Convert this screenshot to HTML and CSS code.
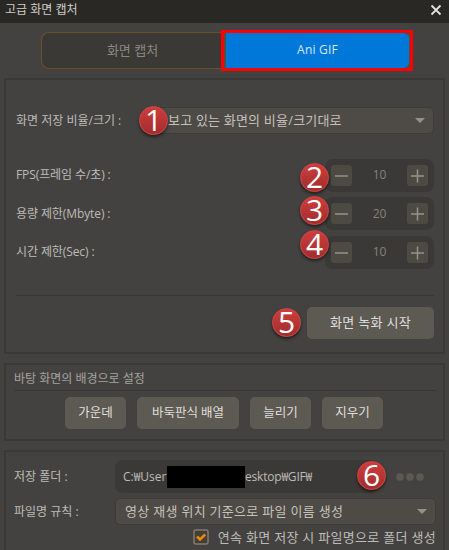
FILE: index.html
```html
<!DOCTYPE html>
<html lang="ko">
<head>
    <meta charset="UTF-8">
    <title>고급 화면 캡처</title>
    <link rel="stylesheet" href="styles.css">
</head>

<body>
    <header class="titlebar">
        <span>고급 화면 캡처</span>
        <svg class="close" width="12" height="12" viewBox="0 0 12 12"><path d="M1.5 1.5l9 9M10.5 1.5l-9 9"/></svg>
    </header>

    <nav class="tabs">
        <div class="tab"><span>화면 캡처</span></div>
        <div class="tab-active"><div class="tab-fill"><span>Ani GIF</span></div></div>
    </nav>

    <section class="panel capture">
        <div class="row row-ratio">
            <span>화면 저장 비율/크기 :</span>
            <div class="select ratio"><span>보고 있는 화면의 비율/크기대로</span><i class="arrow"></i></div>
            <b class="badge b1">1</b>
        </div>
        <div class="row">
            <span class="tight">FPS(프레임 수/초) :</span>
            <div class="stepper">
                <svg width="21" height="21" viewBox="0 0 21 21"><path d="M4 11h13"/></svg>
                <span>10</span>
                <svg width="21" height="21" viewBox="0 0 21 21"><path d="M4 11h13M10.5 4.5v13"/></svg>
            </div>
            <b class="badge b2">2</b>
        </div>
        <div class="row">
            <span class="tight">용량 제한(Mbyte) :</span>
            <div class="stepper">
                <svg width="21" height="21" viewBox="0 0 21 21"><path d="M4 11h13"/></svg>
                <span>20</span>
                <svg width="21" height="21" viewBox="0 0 21 21"><path d="M4 11h13M10.5 4.5v13"/></svg>
            </div>
            <b class="badge b3">3</b>
        </div>
        <div class="row">
            <span class="tight">시간 제한(Sec) :</span>
            <div class="stepper">
                <svg width="21" height="21" viewBox="0 0 21 21"><path d="M4 11h13"/></svg>
                <span>10</span>
                <svg width="21" height="21" viewBox="0 0 21 21"><path d="M4 11h13M10.5 4.5v13"/></svg>
            </div>
            <b class="badge b4">4</b>
        </div>
        <div class="record">
            <div class="btn start"><span>화면 녹화 시작</span></div>
            <b class="badge b5">5</b>
        </div>
    </section>

    <section class="panel wallpaper">
        <div class="heading"><span>바탕 화면의 배경으로 설정</span></div>
        <div class="buttons">
            <div class="btn w62"><span>가운데</span></div>
            <div class="btn w102"><span>바둑판식 배열</span></div>
            <div class="btn w62"><span>늘리기</span></div>
            <div class="btn w62"><span>지우기</span></div>
        </div>
    </section>

    <section class="panel storage">
        <div class="line folder">
            <span>저장 폴더 :</span>
            <div class="path">
                <span class="t-user">C:₩User</span>
                <span class="mask"></span>
                <span class="t-desk">esktop₩GIF₩</span>
            </div>
            <svg class="dots" width="28" height="8" viewBox="0 0 28 8"><circle cx="4" cy="4" r="3.8"/><circle cx="14" cy="4" r="3.8"/><circle cx="24" cy="4" r="3.8"/></svg>
            <b class="badge b6">6</b>
        </div>
        <div class="line rule">
            <span>파일명 규칙 :</span>
            <div class="select name"><span>영상 재생 위치 기준으로 파일 이름 생성</span><i class="arrow"></i></div>
        </div>
        <div class="check">
            <svg width="16" height="16" viewBox="0 0 16 16"><rect x="1" y="1" width="14" height="14" rx="2"/><path d="M4 7.5l3 3 5.200-5"/></svg>
            <span>연속 화면 저장 시 파일명으로 폴더 생성</span>
        </div>
    </section>
</body>
</html>
```
FILE: styles.css
```css
* {
    box-sizing: border-box;
}

body {
    margin: 0;
    width: 449px;
    height: 550px;
    overflow: hidden;
    background: #444240;
    color: #bdbbb7;
    font-family: "Open Sans", "Noto Sans CJK KR", sans-serif;
    font-size: 12px;
    line-height: 16px;
    white-space: nowrap;
}

.titlebar {
    display: flex;
    justify-content: space-between;
    align-items: center;
    height: 23px;
    padding: 0 7px 3px 5px;
    background: #292824;
    color: #d0cec9;
}

.close path {
    stroke: #e4e3e0;
    stroke-width: 1.800;
    fill: none;
}

.tabs {
    display: flex;
    align-items: center;
    height: 41px;
    margin: 7px 36px 0 41px;
}

.tab {
    display: flex;
    align-items: center;
    justify-content: center;
    width: 180px;
    height: 37px;
    padding: 0 0 2px 2px;
    border: 1px solid #6a4f2d;
    border-right: 0;
    border-radius: 8px 0 0 8px;
    background: #3b3936;
    color: #8c887e;
    font-size: 13px;
}

.tab-active {
    width: 192px;
    height: 41px;
    border: 3px solid #ff0000;
    background: #5a4c3c;
    padding: 0 1px 0 2px;
}

.tab-fill {
    display: flex;
    align-items: center;
    justify-content: center;
    height: 35px;
    padding-bottom: 2px;
    border-radius: 0 6px 6px 0;
    background: #0078d9;
    color: #d9e8f6;
    letter-spacing: 0.2px;
}

.panel {
    width: 441px;
    margin-left: 4px;
    border: 2px solid #3b3937;
}

.capture {
    height: 276px;
    margin-top: 7px;
    padding: 22px 9px 0 10px;
}

.row {
    position: relative;
    display: flex;
    align-items: center;
    justify-content: space-between;
    height: 38.5px;
}

.row-ratio {
    height: 37px;
    margin-bottom: 17px;
}

.tight {
    letter-spacing: -0.1px;
}

.select {
    display: flex;
    align-items: center;
    justify-content: space-between;
    height: 27px;
    border: 1px solid #3e3b38;
    border-radius: 5px;
    background: #4e4a46;
    color: #c4c1bc;
    font-size: 13px;
}

.select span {
    padding-bottom: 2px;
}

.ratio {
    width: 280px;
    padding: 0 8px 0 13px;
    letter-spacing: 0.2px;
}

.arrow {
    border: 5px solid transparent;
    border-top-color: #979086;
    border-bottom: 0;
}

.stepper {
    display: flex;
    align-items: center;
    justify-content: space-between;
    width: 109px;
    height: 33px;
    padding: 0 6px;
    border-radius: 8px;
    background: #3b3937;
    color: #858178;
}

.stepper svg {
    border-radius: 3px;
    background: #4d4a44;
}

.stepper path {
    stroke: #979287;
    stroke-width: 1.500;
}

.badge {
    position: absolute;
    width: 29px;
    height: 29px;
    border: 1px solid #cf4543;
    border-radius: 50%;
    background: linear-gradient(#cf3d3c, #a12d2d);
    box-shadow: 0 2px 3px rgba(0, 0, 0, 0.5);
    color: #fff;
    font-size: 30px;
    font-weight: 400;
    line-height: 26px;
    text-align: center;
}

.b1 { left: 123px; top: 4px; }
.b2 { left: 284px; top: 7px; }
.b3 { left: 284px; top: 1px; }
.b4 { left: 284px; top: -3.5px; }
.b5 { left: 256px; top: 12px; }
.b6 { left: 343px; top: 1px; }

.record {
    position: relative;
    display: flex;
    justify-content: flex-end;
    height: 46px;
    margin-top: 23.5px;
    padding-top: 11px;
    border-top: 1px solid #393735;
}

.btn {
    display: flex;
    align-items: center;
    justify-content: center;
    height: 32px;
    border-radius: 5px;
    background: #5c5a53;
    color: #e0dedb;
    font-size: 12.5px;
}

.start {
    width: 127px;
    padding-bottom: 2px;
    font-size: 13px;
    letter-spacing: 0.3px;
}

.wallpaper {
    height: 78px;
    margin-top: 9px;
    padding: 0 7px 0 8px;
}

.heading {
    height: 26px;
    padding-top: 6px;
    border-bottom: 1px solid #393735;
    color: #a5a39f;
}

.buttons {
    display: flex;
    gap: 11px;
    padding: 6px 0 0 51px;
}

.w62 { width: 61px; }
.w102 { width: 102px; }

.storage {
    height: 110px;
    margin-top: 9px;
    padding: 8px 7px 0 8px;
    border-bottom: 0;
}

.line {
    position: relative;
    display: flex;
    align-items: center;
    height: 33px;
}

.line > span {
    width: 101px;
}

.path {
    display: flex;
    align-items: center;
    width: 262px;
    height: 33px;
    padding-left: 8px;
    border-radius: 8px;
    background: #3b3937;
    color: #bebbb6;
}

.t-user {
    width: 44px;
}

.t-desk {
    letter-spacing: -0.2px;
}

.mask {
    width: 78px;
    height: 22px;
    background: #000;
}

.dots {
    margin-left: 19px;
    fill: #5c5952;
}

.rule {
    height: 27px;
    margin-top: 5px;
}

.name {
    width: 321px;
    padding: 0 8px 0 9px;
    letter-spacing: 0.3px;
}

.check {
    display: flex;
    align-items: center;
    justify-content: flex-end;
    gap: 9px;
    height: 24px;
    font-size: 13px;
    letter-spacing: 0.3px;
}

.check rect {
    fill: #423e3a;
    stroke: #817b71;
    stroke-width: 1.500;
}

.check path {
    fill: none;
    stroke: #f08a00;
    stroke-width: 2.500;
}
```
